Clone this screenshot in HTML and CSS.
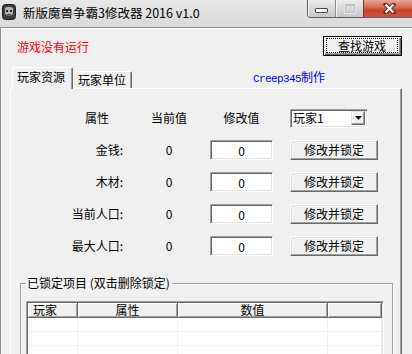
FILE: index.html
```html
<!DOCTYPE html>
<html>
<head>
<meta charset="utf-8">
<title>新版魔兽争霸3修改器 2016 v1.0</title>
<link rel="stylesheet" href="styles.css">
</head>
<body>
<div id="win">
	<div id="titlebar">
		<svg class="appicon" width="14" height="16" viewBox="0 0 14 16">
			<rect x="0.5" y="0.5" width="13" height="15" rx="3" fill="#3c3c3c" stroke="#1e1e1e"/>
			<path d="M3 4 Q7 1.5 11 4 L11 10 Q7 14 3 10 Z" fill="#b4b4b4"/>
			<rect x="4" y="6" width="2" height="2" fill="#222"/>
			<rect x="8" y="6" width="2" height="2" fill="#222"/>
			<rect x="5" y="10" width="4" height="1.5" fill="#444"/>
		</svg>
		<span class="title">新版魔兽争霸3修改器 2016 v1.0</span>
		<div class="caption">
			<span class="cap cap-min"><i></i></span>
			<span class="cap cap-max"><i></i></span>
			<span class="cap cap-close">
				<svg width="13" height="11" viewBox="0 0 13 11">
					<path d="M2.5 1.5 L10.5 9.5 M10.5 1.5 L2.5 9.5" stroke="#5a2e26" stroke-width="4" stroke-linecap="square"/>
					<path d="M2.5 1.5 L10.5 9.5 M10.5 1.5 L2.5 9.5" stroke="#fff" stroke-width="2.2"/>
				</svg>
			</span>
		</div>
	</div>

	<div id="client">
		<div class="toprow">
			<span class="status">游戏没有运行</span>
			<button class="btn btn-default"><span class="focus">查找游戏</span></button>
		</div>

		<div class="tabs">
			<div class="tab active">玩家资源</div>
			<div class="tab">玩家单位</div>
			<span class="credit"><span class="mono">Creep345</span>制作</span>
		</div>

		<div class="panel">
			<div class="form">
				<span class="hd hd-attr">属性</span>
				<span class="hd val">当前值</span>
				<span class="hd hd-new">修改值</span>
				<div class="combo">
					<span>玩家1</span>
					<span class="drop">
						<svg width="7" height="4" viewBox="0 0 7 4"><polygon points="0,0 7,0 3.5,4" fill="#000"/></svg>
					</span>
				</div>

				<span class="lbl">金钱:</span>
				<span class="val">0</span>
				<input class="edit" type="text" value="0">
				<button class="btn">修改并锁定</button>

				<span class="lbl">木材:</span>
				<span class="val">0</span>
				<input class="edit" type="text" value="0">
				<button class="btn">修改并锁定</button>

				<span class="lbl">当前人口:</span>
				<span class="val">0</span>
				<input class="edit" type="text" value="0">
				<button class="btn">修改并锁定</button>

				<span class="lbl">最大人口:</span>
				<span class="val">0</span>
				<input class="edit" type="text" value="0">
				<button class="btn">修改并锁定</button>
			</div>

			<fieldset class="group">
				<legend>已锁定项目 (双击删除锁定)</legend>
				<div class="list">
					<div class="lv-head">
						<span class="c1 left">玩家</span><span class="c2">属性</span><span class="c3">数值</span><span class="c4"></span>
					</div>
					<div class="lv-row"><span class="c1"></span><span class="c2"></span><span class="c3"></span><span class="c4"></span></div>
					<div class="lv-row"><span class="c1"></span><span class="c2"></span><span class="c3"></span><span class="c4"></span></div>
					<div class="lv-row"><span class="c1"></span><span class="c2"></span><span class="c3"></span><span class="c4"></span></div>
				</div>
			</fieldset>
		</div>
	</div>
</div>
</body>
</html>
```

FILE: styles.css
```css
body {
	margin: 0;
	background: #f0f0f0;
	font: 12px/14px "Noto Sans CJK SC", sans-serif;
	color: #000;
	overflow: hidden;
}
#win {
	width: 412px;
	height: 354px;
	overflow: hidden;
	display: flex;
	flex-direction: column;
}

/* title bar */
#titlebar {
	height: 27px;
	flex: none;
	display: flex;
	align-items: flex-start;
	background: linear-gradient(#e8e8e8, #d9d9d9);
}
.appicon { margin: 4px 0 0 2px; flex: none; }
.title {
	margin: 5px 0 0 7px;
	font-size: 12.5px;
	line-height: 16px;
	white-space: nowrap;
}
.caption {
	margin-left: auto;
	display: flex;
	height: 17px;
	flex: none;
	border: 1px solid #5f5f5f;
	border-top: none;
	border-radius: 0 0 0 4px;
	overflow: hidden;
	margin-right: -6px;
}
.cap {
	display: flex;
	align-items: center;
	justify-content: center;
	height: 100%;
}
.cap-min, .cap-max {
	width: 27px;
	background: linear-gradient(#ececec, #d6d6d6 55%, #c9c9c9);
	box-shadow: inset 1px 0 #f6f6f6;
}
.cap-max { border-left: 1px solid #8c8c8c; }
.cap-min i {
	display: block;
	width: 11px;
	height: 3px;
	margin-top: 3px;
	background: #fff;
	border: 1px solid #4b4b4b;
	border-radius: 1px;
}
.cap-max i {
	display: block;
	width: 8px;
	height: 6px;
	border: 1px solid #c2c2c2;
	border-top-width: 2px;
	box-shadow: 0 0 0 1px #e2e2e2;
}
.cap-close {
	width: 51px;
	border-left: 1px solid #7a3c32;
	padding-right: 2px;
	background: linear-gradient(#e8a896, #d8644f 45%, #c7412d 60%, #d0553f);
}

/* client area */
#client {
	flex: 1;
	border-top: 1px solid #8f8f8f;
	border-left: 1px solid #8f8f8f;
	box-shadow: inset 1px 1px #fff;
	display: flex;
	flex-direction: column;
}
.toprow {
	display: flex;
	align-items: center;
	justify-content: space-between;
	padding: 8px 10px 0 16px;
}
.status { color: #ff0000; padding-top: 2px; }

.btn {
	font: inherit;
	color: #000;
	padding: 0;
	width: 88px;
	height: 20px;
	background: #f0f0f0;
	border: 1px solid;
	border-color: #fff #696969 #696969 #fff;
	box-shadow: inset -1px -1px #a0a0a0, inset 1px 1px #e3e3e3;
	line-height: 16px;
}
.btn-default {
	width: 79px;
	border-color: #000;
	box-shadow: inset 1px 1px #fff, inset -1px -1px #696969, inset -2px -2px #a0a0a0;
}
.btn-default .focus {
	display: block;
	margin: 1px 3px 2px 2px;
	border: 1px dotted #000;
	line-height: 13px;
}

/* tabs */
.tabs {
	display: flex;
	align-items: flex-end;
	height: 21px;
	margin-top: 11px;
	padding-left: 11px;
}
.tab {
	box-sizing: border-box;
	width: 59px;
	height: 17px;
	padding: 1px 0 0 4px;
	border: 1px solid;
	border-color: #fff #696969 transparent #fff;
	border-bottom: none;
	border-radius: 2px 2px 0 0;
	box-shadow: inset -1px 0 #a0a0a0;
	background: #f0f0f0;
}
.tab.active {
	width: 61px;
	height: 22px;
	padding-top: 2px;
	margin-bottom: -1px;
	position: relative;
	z-index: 1;
}
.credit {
	margin: 0 0 2px 121px;
	color: #0000ff;
	white-space: nowrap;
}
.mono {
	font-family: "Liberation Mono", monospace;
	font-size: 11px;
	letter-spacing: -0.6px;
}

/* tab page */
.panel {
	flex: 1;
	width: 392px;
	box-sizing: border-box;
	margin-left: 9px;
	border-top: 1px solid #fff;
	border-left: 1px solid #fff;
	border-right: 1px solid #696969;
	box-shadow: inset -1px 0 #a0a0a0;
}
.form {
	display: grid;
	grid-template-columns: 112px 87px 80px 88px;
	grid-auto-rows: 20px;
	row-gap: 12px;
	align-items: center;
	padding-top: 19px;
}
.hd-attr { text-align: right; padding-right: 14px; }
.hd-new { width: 63px; text-align: center; }
.lbl { text-align: right; white-space: nowrap; }
.val { text-align: center; padding-left: 5px; }

.edit {
	box-sizing: border-box;
	width: 63px;
	height: 20px;
	padding: 0;
	font: inherit;
	text-align: center;
	background: #fff;
	border: 1px solid;
	border-color: #a0a0a0 #fff #fff #a0a0a0;
	box-shadow: inset 1px 1px #696969, inset -1px -1px #e3e3e3;
	outline: none;
}

.combo {
	box-sizing: border-box;
	width: 78px;
	height: 19px;
	display: flex;
	align-items: center;
	justify-content: space-between;
	padding: 0 2px 0 2px;
	background: #fff;
	border: 1px solid;
	border-color: #a0a0a0 #fff #fff #a0a0a0;
	box-shadow: inset 1px 1px #696969, inset -1px -1px #e3e3e3;
}
.drop {
	box-sizing: border-box;
	width: 14px;
	height: 14px;
	display: flex;
	align-items: center;
	justify-content: center;
	background: #f0f0f0;
	border: 1px solid;
	border-color: #e3e3e3 #696969 #696969 #e3e3e3;
	box-shadow: inset -1px -1px #a0a0a0, inset 1px 1px #fff;
}

/* locked items group */
.group {
	margin: 20px 8px 0 9px;
	padding: 0 8px 0 5px;
	height: 90px;
	min-width: 0;
	border: 1px solid #a0a0a0;
	box-shadow: 1px 1px #fff, inset 1px 1px #fff;
}
.group legend {
	padding: 0 2px 0 1px;
	line-height: 14px;
}
.list {
	margin-top: 11px;
	height: 70px;
	background: #fff;
	border: 1px solid;
	border-color: #a0a0a0 #fff #fff #a0a0a0;
	box-shadow: inset 1px 1px #696969, inset -1px -1px #e3e3e3;
	padding: 1px;
	overflow: hidden;
}
.lv-head, .lv-row { display: flex; }
.lv-head span {
	box-sizing: border-box;
	height: 15px;
	line-height: 13px;
	text-align: center;
	background: #f0f0f0;
	border-right: 1px solid #696969;
	border-bottom: 1px solid #696969;
	box-shadow: inset 1px 1px #fff, inset -1px -1px #a0a0a0;
}
.lv-head span.left { text-align: left; padding-left: 5px; }
.lv-row span {
	box-sizing: border-box;
	height: 14px;
	border-right: 1px solid #f0f0f0;
	border-bottom: 1px solid #f0f0f0;
}
.c1 { width: 50px; }
.c2 { width: 100px; }
.c3 { width: 150px; }
.c4 { width: 54px; }
```
